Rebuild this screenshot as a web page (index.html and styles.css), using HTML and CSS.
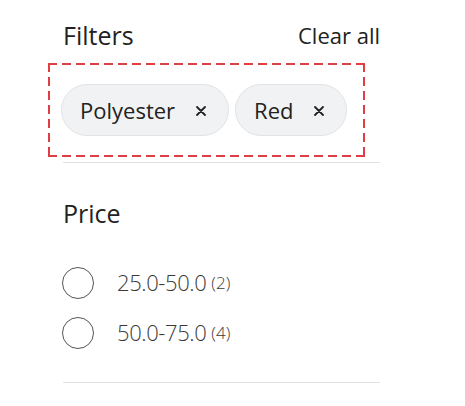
FILE: index.html
```html
<!DOCTYPE html>
<html lang="en">
<head>
<meta charset="utf-8">
<title>Filters</title>
<link rel="stylesheet" href="styles.css">
</head>
<body>
<div class="panel">
  <div class="header">
    <h2 class="title">Filters</h2>
    <a class="clear" href="#">Clear all</a>
  </div>
  <div class="chips">
    <span class="chip">Polyester
      <svg class="x" viewBox="0 0 10 10" width="10" height="10"><path d="M1 1L9 9M9 1L1 9" stroke="#222" stroke-width="1.8" stroke-linecap="round"/></svg>
    </span>
    <span class="chip">Red
      <svg class="x" viewBox="0 0 10 10" width="10" height="10"><path d="M1 1L9 9M9 1L1 9" stroke="#222" stroke-width="1.8" stroke-linecap="round"/></svg>
    </span>
  </div>
  <div class="divider"></div>
  <h2 class="section-title">Price</h2>
  <ul class="options">
    <li class="option"><span class="radio"></span><span class="label">25.0-50.0</span><span class="count">(2)</span></li>
    <li class="option"><span class="radio"></span><span class="label">50.0-75.0</span><span class="count">(4)</span></li>
  </ul>
  <div class="divider bottom"></div>
</div>
</body>
</html>
```

FILE: styles.css
```css
html, body {
  margin: 0;
  padding: 0;
  background: #fff;
}
body {
  font-family: "Open Sans", "Noto Sans", sans-serif;
  color: #222;
}
.panel {
  width: 317px;
  padding: 19px 0 0 63px;
}
.header {
  display: flex;
  justify-content: space-between;
  align-items: baseline;
  margin-bottom: 11px;
}
.title, .section-title {
  margin: 0;
  font-size: 25px;
  line-height: 32px;
  font-weight: 400;
  color: #222;
}
.clear {
  font-size: 22px;
  line-height: 32px;
  color: #222;
  text-decoration: none;
  margin-right: 0;
  position: relative;
  top: -1px;
}
.chips {
  display: flex;
  gap: 6px;
  margin-left: -15px;
  width: 317px;
  box-sizing: border-box;
  padding: 21px 13px 21px 13px;
  background:
    linear-gradient(90deg, #df3f42 62%, transparent 0) top left / 14px 2px repeat-x,
    linear-gradient(90deg, #df3f42 62%, transparent 0) bottom left / 14px 2px repeat-x,
    linear-gradient(180deg, #df3f42 62%, transparent 0) top left / 2px 14px repeat-y,
    linear-gradient(180deg, #df3f42 62%, transparent 0) top right / 2px 14px repeat-y;
}
.chip {
  display: inline-flex;
  align-items: center;
  gap: 21px;
  height: 52px;
  box-sizing: border-box;
  padding: 0 22px 0 18px;
  background: #f1f2f4;
  border: 1px solid #e2e3e5;
  border-radius: 26px;
  font-size: 22px;
  color: #222;
}
.x {
  display: block;
  margin-top: 2px;
}
.divider {
  height: 1px;
  background: #e2e2e2;
  margin-top: 5px;
}
.section-title {
  margin-top: 34px;
}
.options {
  list-style: none;
  margin: 38px 0 0 0;
  padding: 0;
  display: flex;
  flex-direction: column;
  gap: 18px;
}
.option {
  display: flex;
  align-items: center;
  height: 32px;
  color: #3a3a3a;
}
.radio {
  width: 32px;
  height: 32px;
  box-sizing: border-box;
  border: 1.5px solid #555;
  border-radius: 50%;
  margin-left: -1px;
  margin-right: 23px;
  flex: none;
}
.label {
  font-size: 22px;
  font-weight: 300;
  letter-spacing: -0.4px;
  margin-top: -3px;
}
.count {
  font-size: 17px;
  font-weight: 300;
  margin-left: 5px;
  margin-top: -1px;
}
.divider.bottom {
  margin-top: 33px;
}
```
